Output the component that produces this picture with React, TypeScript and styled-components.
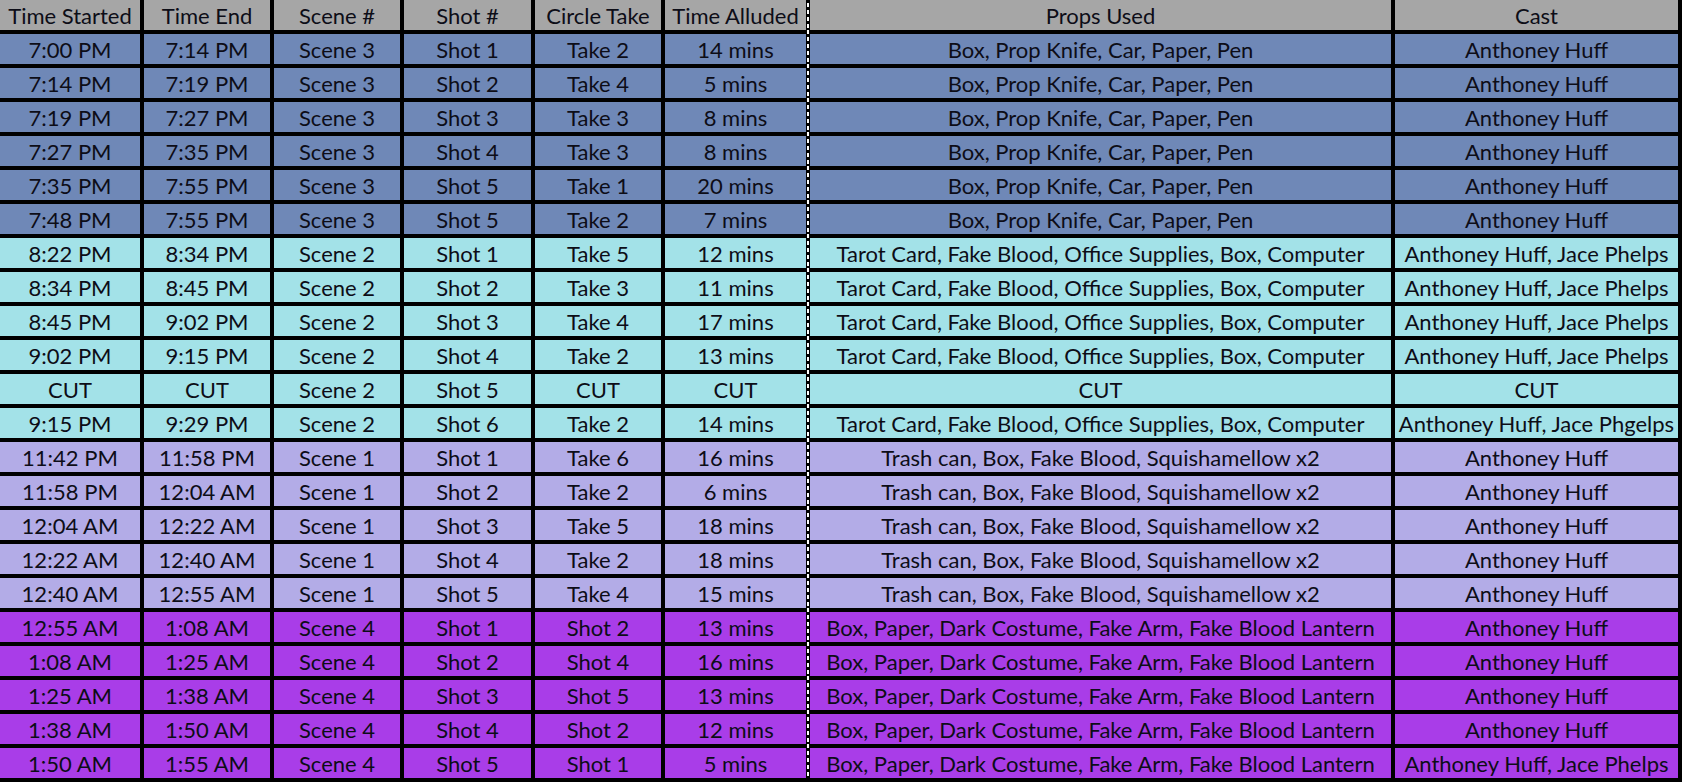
import styled, { createGlobalStyle } from 'styled-components';

const GlobalStyle = createGlobalStyle`
  html, body {
    margin: 0;
    padding: 0;
    background: #000;
  }
`;

type Tone = 'head' | 'blue' | 'cyan' | 'lavender' | 'purple';

const tones: Record<Tone, string> = {
  head: '#a6a6a6',
  blue: '#6f88b7',
  cyan: '#a3e2e8',
  lavender: '#b3ace7',
  purple: '#a93de8',
};

const Sheet = styled.div`
  display: grid;
  grid-template-columns: 140px 126px 126px 127px 126px 141px 581px 283px;
  grid-auto-rows: 30px;
  gap: 4px;
  padding: 0 4px 4px 0;
  width: 1682px;
  box-sizing: border-box;
  background: #000;
  font-family: Lato, 'Noto Sans', sans-serif;
  font-size: 22px;
  color: #0d0d17;
`;

const Cell = styled.div<{ $tone: Tone; $dashed?: boolean }>`
  position: relative;
  display: flex;
  align-items: center;
  justify-content: center;
  white-space: nowrap;
  overflow: visible;
  background: ${({ $tone }) => tones[$tone]};

  ${({ $dashed }) =>
    $dashed &&
    `
    &::before {
      content: '';
      position: absolute;
      left: -3px;
      top: -4px;
      bottom: 0;
      width: 2px;
      background: repeating-linear-gradient(
        to bottom,
        #fff 0 4px,
        transparent 4px 7px
      );
    }
  `}
`;

const headers = [
  'Time Started',
  'Time End',
  'Scene #',
  'Shot #',
  'Circle Take',
  'Time Alluded',
  'Props Used',
  'Cast',
];

const propsBlue = 'Box, Prop Knife, Car, Paper, Pen';
const propsCyan = 'Tarot Card, Fake Blood, Office Supplies, Box, Computer';
const propsLav = 'Trash can, Box, Fake Blood, Squishamellow x2';
const propsPurple = 'Box, Paper, Dark Costume, Fake Arm, Fake Blood Lantern';
const ah = 'Anthoney Huff';
const ahjp = 'Anthoney Huff, Jace Phelps';

type Row = { tone: Tone; cells: string[] };

const rows: Row[] = [
  { tone: 'blue', cells: ['7:00 PM', '7:14 PM', 'Scene 3', 'Shot 1', 'Take 2', '14 mins', propsBlue, ah] },
  { tone: 'blue', cells: ['7:14 PM', '7:19 PM', 'Scene 3', 'Shot 2', 'Take 4', '5 mins', propsBlue, ah] },
  { tone: 'blue', cells: ['7:19 PM', '7:27 PM', 'Scene 3', 'Shot 3', 'Take 3', '8 mins', propsBlue, ah] },
  { tone: 'blue', cells: ['7:27 PM', '7:35 PM', 'Scene 3', 'Shot 4', 'Take 3', '8 mins', propsBlue, ah] },
  { tone: 'blue', cells: ['7:35 PM', '7:55 PM', 'Scene 3', 'Shot 5', 'Take 1', '20 mins', propsBlue, ah] },
  { tone: 'blue', cells: ['7:48 PM', '7:55 PM', 'Scene 3', 'Shot 5', 'Take 2', '7 mins', propsBlue, ah] },
  { tone: 'cyan', cells: ['8:22 PM', '8:34 PM', 'Scene 2', 'Shot 1', 'Take 5', '12 mins', propsCyan, ahjp] },
  { tone: 'cyan', cells: ['8:34 PM', '8:45 PM', 'Scene 2', 'Shot 2', 'Take 3', '11 mins', propsCyan, ahjp] },
  { tone: 'cyan', cells: ['8:45 PM', '9:02 PM', 'Scene 2', 'Shot 3', 'Take 4', '17 mins', propsCyan, ahjp] },
  { tone: 'cyan', cells: ['9:02 PM', '9:15 PM', 'Scene 2', 'Shot 4', 'Take 2', '13 mins', propsCyan, ahjp] },
  { tone: 'cyan', cells: ['CUT', 'CUT', 'Scene 2', 'Shot 5', 'CUT', 'CUT', 'CUT', 'CUT'] },
  { tone: 'cyan', cells: ['9:15 PM', '9:29 PM', 'Scene 2', 'Shot 6', 'Take 2', '14 mins', propsCyan, 'Anthoney Huff, Jace Phgelps'] },
  { tone: 'lavender', cells: ['11:42 PM', '11:58 PM', 'Scene 1', 'Shot 1', 'Take 6', '16 mins', propsLav, ah] },
  { tone: 'lavender', cells: ['11:58 PM', '12:04 AM', 'Scene 1', 'Shot 2', 'Take 2', '6 mins', propsLav, ah] },
  { tone: 'lavender', cells: ['12:04 AM', '12:22 AM', 'Scene 1', 'Shot 3', 'Take 5', '18 mins', propsLav, ah] },
  { tone: 'lavender', cells: ['12:22 AM', '12:40 AM', 'Scene 1', 'Shot 4', 'Take 2', '18 mins', propsLav, ah] },
  { tone: 'lavender', cells: ['12:40 AM', '12:55 AM', 'Scene 1', 'Shot 5', 'Take 4', '15 mins', propsLav, ah] },
  { tone: 'purple', cells: ['12:55 AM', '1:08 AM', 'Scene 4', 'Shot 1', 'Shot 2', '13 mins', propsPurple, ah] },
  { tone: 'purple', cells: ['1:08 AM', '1:25 AM', 'Scene 4', 'Shot 2', 'Shot 4', '16 mins', propsPurple, ah] },
  { tone: 'purple', cells: ['1:25 AM', '1:38 AM', 'Scene 4', 'Shot 3', 'Shot 5', '13 mins', propsPurple, ah] },
  { tone: 'purple', cells: ['1:38 AM', '1:50 AM', 'Scene 4', 'Shot 4', 'Shot 2', '12 mins', propsPurple, ah] },
  { tone: 'purple', cells: ['1:50 AM', '1:55 AM', 'Scene 4', 'Shot 5', 'Shot 1', '5 mins', propsPurple, ahjp] },
];

export default function App() {
  return (
    <>
      <GlobalStyle />
      <Sheet>
        {headers.map((h, i) => (
          <Cell key={h} $tone="head" $dashed={i === 6}>
            {h}
          </Cell>
        ))}
        {rows.map((row, r) =>
          row.cells.map((text, c) => (
            <Cell key={`${r}-${c}`} $tone={row.tone} $dashed={c === 6}>
              {text}
            </Cell>
          ))
        )}
      </Sheet>
    </>
  );
}
